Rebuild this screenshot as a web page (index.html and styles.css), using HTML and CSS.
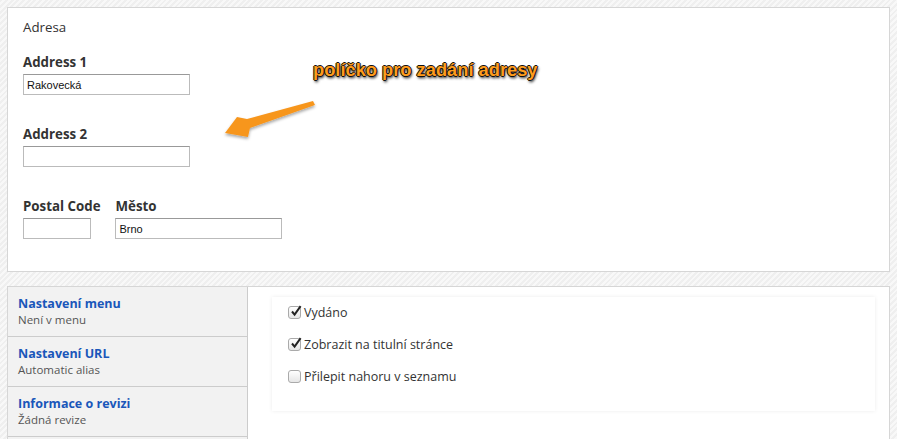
FILE: index.html
```html
<!DOCTYPE html>
<html lang="cs">
  <head>
    <meta charset="UTF-8" />
    <title>Adresa</title>
    <link rel="stylesheet" href="styles.css">
  </head>
  <body>
    <div class="panel address">
      <div class="legend">Adresa</div>

      <div class="field">
        <label>Address 1</label>
        <input type="text" class="wide" value="Rakovecká" />
      </div>

      <div class="field second">
        <label>Address 2</label>
        <input type="text" class="wide" value="" />
      </div>

      <div class="field-row">
        <div class="field">
          <label>Postal Code</label>
          <input type="text" class="short" value="" />
        </div>
        <div class="field">
          <label>Město</label>
          <input type="text" class="wide" value="Brno" />
        </div>
      </div>
    </div>

    <div class="panel tabs">
      <ul class="tab-list">
        <li>
          <a href="#">Nastavení menu</a>
          <span>Není v menu</span>
        </li>
        <li>
          <a href="#">Nastavení URL</a>
          <span>Automatic alias</span>
        </li>
        <li>
          <a href="#">Informace o revizi</a>
          <span>Žádná revize</span>
        </li>
        <li></li>
      </ul>
      <div class="tab-pane">
        <div class="options">
          <div class="option">
            <span class="check on"><svg viewBox="0 0 13 13"><path d="M3 6.5 L5.6 9.6 L11.6 1.2" /></svg></span>
            Vydáno
          </div>
          <div class="option">
            <span class="check on"><svg viewBox="0 0 13 13"><path d="M3 6.5 L5.6 9.6 L11.6 1.2" /></svg></span>
            Zobrazit na titulní stránce
          </div>
          <div class="option">
            <span class="check"></span>
            Přilepit nahoru v seznamu
          </div>
        </div>
      </div>
    </div>

    <!-- popisek ze screenshotu -->
    <div class="note">políčko pro zadání adresy</div>
    <svg class="arrow" width="897" height="439" viewBox="0 0 897 439">
      <defs>
        <filter id="shadow" x="-20%" y="-20%" width="140%" height="160%">
          <feDropShadow dx="0" dy="2" stdDeviation="1.5" flood-color="#000" flood-opacity="0.35" />
        </filter>
      </defs>
      <polygon points="313,101 247,119 237,117 225,133 248,137 250,128 315,105" fill="#f7961e" filter="url(#shadow)" />
    </svg>
  </body>
</html>
```

FILE: styles.css
```css
html {
  background: #f3f3f3;
}

body {
  margin: 0;
  padding: 7px 7px 0 7px;
  position: relative;
  min-height: 432px;
  font-family: "Open Sans", sans-serif;
  color: #333;
  background: repeating-linear-gradient(135deg, #efefef 0, #efefef 2px, #f8f8f8 2px, #f8f8f8 4px);
}

.panel {
  background: #fff;
  border: 1px solid #d6d6d6;
}

.address {
  height: 249px;
  padding: 10px 15px 4px 15px;
}

.legend {
  font-size: 13.3px;
  line-height: 18px;
  color: #333;
  margin-bottom: 17px;
}

.field label {
  display: block;
  font-weight: bold;
  font-size: 13.3px;
  line-height: 18px;
  margin-bottom: 3px;
}

.field.second {
  margin-top: 30px;
}

.field-row {
  display: flex;
  gap: 15px;
  margin-top: 30px;
}

input {
  display: block;
  box-sizing: border-box;
  height: 21px;
  margin: 0;
  padding: 1px 3px;
  border: 1px solid #bbb;
  border-top-color: #999;
  font-family: "Liberation Sans", Arial, sans-serif;
  font-size: 11px;
  color: #111;
}

input.wide {
  width: 167px;
}

input.short {
  width: 68px;
}

.tabs {
  margin-top: 14px;
  display: flex;
  height: 170px;
}

.tab-list {
  list-style: none;
  margin: 0;
  padding: 0;
  width: 239px;
  background: #f2f2f2;
  border-right: 1px solid #ccc;
}

.tab-list li {
  border-bottom: 1px solid #ccc;
  padding: 8px 10px 0 10px;
  box-sizing: border-box;
  height: 50px;
}

.tab-list a {
  display: block;
  color: #1a57ba;
  font-weight: bold;
  font-size: 12.5px;
  line-height: 17px;
  text-decoration: none;
}

.tab-list span {
  display: block;
  color: #555;
  font-size: 11.5px;
  line-height: 16px;
}

.tab-pane {
  flex: 1;
  padding: 10px 14px 0 24px;
}

.options {
  background: #fff;
  box-shadow: 0 0 4px rgba(0, 0, 0, 0.08);
  height: 114px;
  padding: 7px 16px 0 16px;
  box-sizing: border-box;
}

.option {
  display: flex;
  align-items: center;
  font-size: 12.5px;
  line-height: 17px;
  height: 17px;
  margin-bottom: 15px;
  color: #333;
}

.check {
  width: 11px;
  height: 11px;
  border: 1px solid #aaa;
  border-radius: 3px;
  background: linear-gradient(#fff, #e6e6e6);
  margin-right: 3px;
  position: relative;
}

.check svg {
  position: absolute;
  left: 0;
  top: -2px;
  width: 13px;
  height: 13px;
  fill: none;
  stroke: #222;
  stroke-width: 2;
}

.note {
  position: absolute;
  left: 313px;
  top: 59px;
  font-family: "Liberation Sans", Arial, sans-serif;
  font-weight: bold;
  font-size: 18.3px;
  color: #ff9c1c;
  text-shadow: 1px 0 0 #111, -1px 0 0 #111, 0 1px 0 #111, 0 -1px 0 #111, 1px 2px 3px #000;
  white-space: nowrap;
}

.arrow {
  position: absolute;
  left: 0;
  top: 0;
  pointer-events: none;
}
```
